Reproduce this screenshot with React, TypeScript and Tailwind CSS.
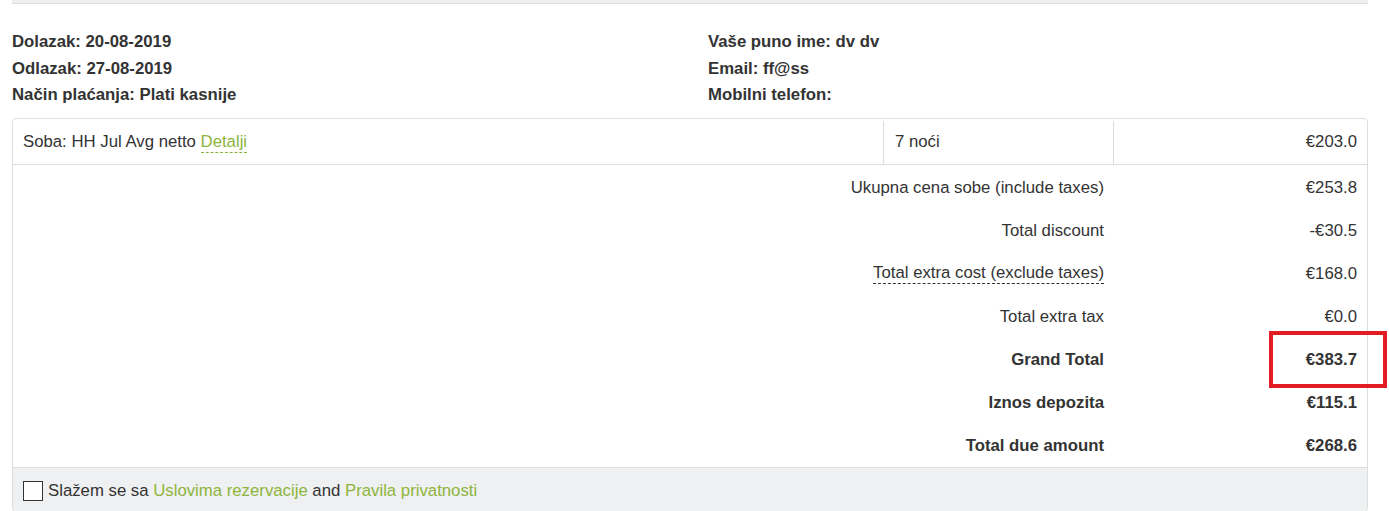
import React from 'react';

type Row = { label: string; value: string; bold?: boolean; dotted?: boolean; mark?: boolean };

const rows: Row[] = [
    { label: 'Ukupna cena sobe (include taxes)', value: '€253.8' },
    { label: 'Total discount', value: '-€30.5' },
    { label: 'Total extra cost (exclude taxes)', value: '€168.0', dotted: true },
    { label: 'Total extra tax', value: '€0.0' },
    { label: 'Grand Total', value: '€383.7', bold: true, mark: true },
    { label: 'Iznos depozita', value: '€115.1', bold: true },
    { label: 'Total due amount', value: '€268.6', bold: true },
];

const App: React.FC = (): React.ReactElement => (
    <div className="min-h-[511px] bg-white text-[16.75px] text-[#333]" style={{ fontFamily: '"Liberation Sans", Arial, sans-serif' }}>
        <div className="ml-[12px] mr-[21px]">
            <div className="h-[4px] border-b border-[#ddd] bg-[#eee]" />

            <div className="grid grid-cols-[696px_1fr] pt-[25px] pb-[9px] font-bold leading-[26.5px]">
                <div>
                    <div>Dolazak: 20-08-2019</div>
                    <div>Odlazak: 27-08-2019</div>
                    <div>Način plaćanja: Plati kasnije</div>
                </div>
                <div>
                    <div>Vaše puno ime: dv dv</div>
                    <div>Email: ff@ss</div>
                    <div>Mobilni telefon:</div>
                </div>
            </div>

            <div className="rounded-[4px] border border-[#ddd]">
                <div className="grid h-[46px] grid-cols-[870px_230px_1fr] border-b border-[#ddd] pt-[2px]">
                    <div className="flex items-center pl-[10px]">
                        Soba: HH Jul Avg netto&nbsp;
                        <span className="border-b border-dashed border-[#8db53c] leading-[20px] text-[#8db53c]">Detalji</span>
                    </div>
                    <div className="flex items-center border-l border-[#ddd] pl-[11px]">7 noći</div>
                    <div className="flex items-center justify-end border-l border-[#ddd] pr-[10px]">€203.0</div>
                </div>

                <div className="pt-[1px]">
                    {rows.map((row) => (
                        <div key={row.label} className={`grid h-[43px] grid-cols-[1100px_1fr] pt-[1px] ${row.bold ? 'font-bold' : ''}`}>
                            <div className="flex items-center justify-end pr-[9px]">
                                {row.dotted ? (
                                    <span className="border-b border-dashed border-[#333] leading-[20px]">{row.label}</span>
                                ) : (
                                    row.label
                                )}
                            </div>
                            <div className="relative flex items-center justify-end pr-[10px]">
                                {row.value}
                                {row.mark && (
                                    <div className="absolute top-[-8px] left-[156px] h-[57px] w-[118px] border-[4px] border-[#e31c24]" />
                                )}
                            </div>
                        </div>
                    ))}
                </div>

                <div className="flex h-[44px] items-center gap-[5px] rounded-b-[4px] border-t border-[#ddd] bg-[#eff0f1] pt-[3px] pl-[10px]">
                    <span className="h-[20px] w-[20px] border border-[#333] bg-white" />
                    <span>
                        Slažem se sa <span className="text-[#8db53c]">Uslovima rezervacije</span> and{' '}
                        <span className="text-[#8db53c]">Pravila privatnosti</span>
                    </span>
                </div>
            </div>
        </div>
    </div>
);

export default App;
